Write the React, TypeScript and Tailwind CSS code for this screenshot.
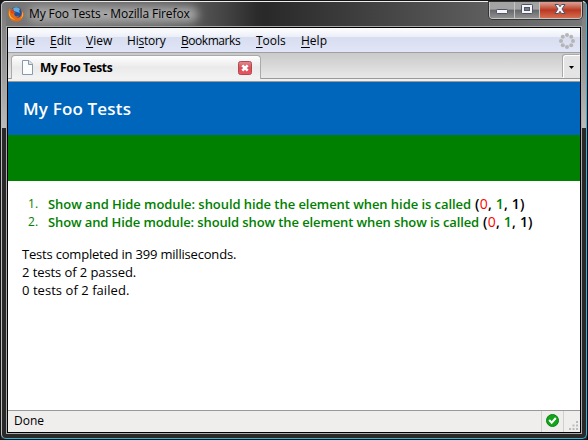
import type { ReactNode } from "react";

const menus: { key: string; before: string; after: string; box: string }[] = [
  { key: "F", before: "", after: "ile", box: "w-[34px]" },
  { key: "E", before: "", after: "dit", box: "w-9" },
  { key: "V", before: "", after: "iew", box: "w-[41px]" },
  { key: "s", before: "Hi", after: "tory", box: "w-[54px] tracking-[-0.2px]" },
  { key: "B", before: "", after: "ookmarks", box: "w-[75px] tracking-[-0.45px]" },
  { key: "T", before: "", after: "ools", box: "w-[45px]" },
  { key: "H", before: "", after: "elp", box: "w-9" },
];

const results = [
  { text: "Show and Hide module: should hide the element when hide is called", spacing: "tracking-[-0.06px]" },
  { text: "Show and Hide module: should show the element when show is called", spacing: "tracking-[-0.11px]" },
];

function FirefoxIcon() {
  return (
    <svg className="h-4 w-4 shrink-0" viewBox="0 0 16 16">
      <circle cx="8.3" cy="7.6" r="6.6" fill="#23509b" />
      <path d="M5 2.5 Q9 0 12 3 L11 5 L12 7 L9 6 L6 5Z" fill="#62aede" />
      <path d="M1.2 2.2 L2.7 3.8 Q4 2.9 5.6 3.5 Q5 4.4 5.2 5.4 L7.5 6 L6 7.7 Q6.4 10.5 9 10.4 L11 9.5 Q10.2 12 8 11.8 Q12.8 12.5 13.7 7.8 Q14 4.5 12.6 2.7 Q16 5.3 15.5 9.2 Q14.2 15.5 8.2 15.5 Q1.4 15 .5 8.5 Q.2 5 1.2 2.2Z" fill="#e66b16" />
      <path d="M1.5 4 Q.8 8 3 10.8 Q4.6 13 7.2 13.5 Q3 13.8 1.3 9.8 Q.3 6.4 1.5 4Z M13.9 5.5 Q15.3 10 12.3 12.8 Q15.2 11.3 15.2 8Z" fill="#ffc43b" />
      <path d="M2.5 4 L5.2 3.7 L4.8 5.3 L7 6.1 L5.6 7.8 L3 7Z" fill="#d94b12" />
    </svg>
  );
}

function WindowButtons() {
  return (
    <div className="absolute top-px left-[488px] flex h-[17px] w-[93px] overflow-hidden rounded-b-[4px] border border-t-0 border-[#c5c5c5] shadow-[0_0_0_1px_#353535]">
      <div className="flex w-[25px] justify-center border-r border-[#c5c5c5] bg-linear-to-b from-[#a3a3a3] from-45% via-[#66676b] via-50% to-[#909090]">
        <svg className="h-4 w-[25px] shrink-0" viewBox="0 0 25 16">
          <rect x="6.5" y="7.5" width="11" height="4" rx=".7" fill="#f5f5f5" stroke="#505469" />
        </svg>
      </div>
      <div className="flex w-[25px] justify-center border-r border-[#c5c5c5] bg-linear-to-b from-[#a3a3a3] from-45% via-[#66676b] via-50% to-[#909090]">
        <svg className="h-4 w-[25px] shrink-0" viewBox="0 0 25 16">
          <rect x="6.5" y="2.5" width="11" height="9" rx=".7" fill="#f5f5f5" stroke="#505469" />
          <rect x="9.5" y="5.5" width="5" height="3" fill="#777a87" stroke="#505469" />
        </svg>
      </div>
      <div className="flex w-[41px] justify-center bg-linear-to-b from-[#d79a8d] from-5% via-[#b93720] via-50% to-[#d66d4e]">
        <svg className="h-4 w-[42px] shrink-0" viewBox="0 0 42 16">
          <path d="M15 2.5H18.5L20 4.7L21.5 2.5H25L22 7L25 11.5H21.5L20 9.3L18.5 11.5H15L18 7Z" fill="#f7f7f7" stroke="#4f536a" />
        </svg>
      </div>
    </div>
  );
}

function TitleBar() {
  return (
    <div className="relative flex h-[24px] shrink-0 items-center bg-linear-to-r from-[#777] from-0% via-[#292929] via-45% to-[#777]">
      <div className="absolute inset-y-0 left-0 w-[250px] bg-linear-to-r from-[#777] via-[#666] via-60% to-transparent" />
      <div className="absolute top-[5px] left-[22px] h-[15px] w-[170px] rounded-full bg-[#aaa] blur-[5px]" />
      <div className="relative flex items-center pl-[2px]">
        <FirefoxIcon />
        <span className="ml-[5px] text-[12px] leading-4 tracking-[-0.1px] whitespace-nowrap text-black">My Foo Tests - Mozilla Firefox</span>
      </div>
    </div>
  );
}

function MenuBar() {
  return (
    <div className="flex h-[25px] shrink-0 items-center border-b border-[#a0a0a0] bg-[linear-gradient(to_bottom,#fff_0%,#eceff8_36%,#d8deef_39%,#e0e6f8_100%)] pt-px pr-[5px] pl-2 text-[12px]">
      <div className="flex h-full w-full items-center">
        {menus.map((m) => (
          <div key={m.key} className={`${m.box} shrink-0 whitespace-nowrap`}>
            {m.before}
            <span className="underline decoration-1 underline-offset-[2px]">{m.key}</span>
            {m.after}
          </div>
        ))}
        <svg className="ml-auto h-4 w-4 shrink-0" viewBox="0 0 16 16" fill="#b5b5b5">
          <circle cx="8" cy="2" r="2" /><circle cx="12.2" cy="3.8" r="2" />
          <circle cx="14" cy="8" r="2" /><circle cx="12.2" cy="12.2" r="2" />
          <circle cx="8" cy="14" r="2" /><circle cx="3.8" cy="12.2" r="2" />
          <circle cx="2" cy="8" r="2" /><circle cx="3.8" cy="3.8" r="2" />
        </svg>
      </div>
    </div>
  );
}

function TabBar() {
  return (
    <div className="flex h-[29px] shrink-0 flex-col bg-[#f0f0f0]">
      <div className="flex h-[26px] items-end border-b border-[#999] bg-linear-to-b from-[#cacaca] to-[#e8e8e8]">
        <div className="h-full w-[3px]" />
        <div className="-mb-px flex h-6 w-[250px] items-center rounded-t-[4px] border border-b-0 border-[#aaa] bg-linear-to-b from-white via-[#eaeaea] via-50% to-[#f3f3f3] pr-2 pl-[10px]">
          <svg className="h-[15px] w-[11px] shrink-0" viewBox="0 0 11 15">
            <path d="M.5 .5H7L10.5 4V14.5H.5Z" fill="#fcfdff" stroke="#8b9aaa" />
            <path d="M6.5 .5V4.5H10.5" fill="#dce5ed" stroke="#8b9aaa" />
          </svg>
          <span className="ml-[7px] text-[12px] font-bold tracking-[-0.4px]">My Foo Tests</span>
          <svg className="ml-auto h-[14px] w-[14px]" viewBox="0 0 14 14">
            <defs>
              <linearGradient id="close" x2="0" y2="1"><stop stopColor="#e18c91" /><stop offset=".5" stopColor="#d65058" /><stop offset="1" stopColor="#ee5360" /></linearGradient>
            </defs>
            <rect x=".5" y=".5" width="13" height="13" rx="2" fill="url(#close)" stroke="#b44850" />
            <path d="M4.3 4.3L9.7 9.7M9.7 4.3L4.3 9.7" stroke="white" strokeWidth="2.6" />
          </svg>
        </div>
        <div className="ml-auto flex h-[23px] w-[17px] items-center justify-center rounded-tl-[3px] border-t border-l border-white bg-[#e4e4e4] pr-px shadow-[-1px_-1px_0_#aaa]">
          <svg className="h-[3px] w-[5px]" viewBox="0 0 5 3"><path d="M0 0H5L2.5 3Z" /></svg>
        </div>
      </div>
      <div className="h-[3px] border-b border-[#9a9a9a]" />
    </div>
  );
}

function Counts({ children }: { children?: ReactNode }) {
  return (
    <span className="ml-[4px] text-[14px] tracking-[0.2px] text-black">
      (<span className="font-normal text-[#f00]">0</span>, <span className="text-[#008000]">1</span>, 1){children}
    </span>
  );
}

function Page() {
  return (
    <main className="flex min-h-0 flex-1 flex-col bg-white">
      <h1 className="flex h-[53px] shrink-0 items-center bg-[#0066bb] pl-[15px] text-[17px] font-semibold tracking-[0.17px] text-white">My Foo Tests</h1>
      <div className="h-[46px] shrink-0 bg-[#008000]" />
      <ol className="mt-[14px] text-[13px] leading-[18px] text-[#008000]">
        {results.map(({ text, spacing }, i) => (
          <li key={text} className="flex h-[18px] whitespace-nowrap">
            <span className="w-10 pl-5 text-[12px]">{i + 1}.</span>
            <span className={`font-semibold ${spacing}`}>{text}<Counts /></span>
          </li>
        ))}
      </ol>
      <div className="mt-[14px] pl-[14px] text-[13px] leading-[18px]">
        <p className="tracking-[-0.2px]">Tests completed in 399 milliseconds.</p>
        <p className="tracking-[-0.08px]">2 tests of 2 passed.</p>
        <p className="tracking-[0.05px]">0 tests of 2 failed.</p>
      </div>
    </main>
  );
}

function StatusBar() {
  return (
    <div className="flex h-[22px] shrink-0 border-t border-[#999] bg-[#f0eded] text-[12px] leading-[19px]">
      <span className="pl-[6px]">Done</span>
      <div className="ml-auto flex w-[23px] items-center justify-center border-x border-[#d2cfcf] pb-[3px]">
        <svg className="h-[13px] w-[13px]" viewBox="0 0 13 13">
          <circle cx="6.5" cy="6.5" r="6" fill="#12a51b" stroke="#078510" />
          <path d="M3.2 6L5.7 8.7L9.8 4" fill="none" stroke="white" strokeWidth="2" />
        </svg>
      </div>
      <div className="flex w-[16px] items-end justify-end p-[1px]">
        <svg className="h-[10px] w-[10px]" viewBox="0 0 10 10" fill="#bbb">
          <path d="M7 0h2v2h-2zM7 3.5h2v2h-2zM3.5 3.5h2v2h-2zM7 7h2v2h-2zM3.5 7h2v2h-2zM0 7h2v2h-2z" />
        </svg>
      </div>
    </div>
  );
}

export default function App() {
  return (
    <div className="h-[440px] w-[588px] overflow-hidden bg-[#161616] font-['Open_Sans','Noto_Sans',sans-serif] text-black">
      <div className="relative flex h-full flex-col rounded-t-[6px] border border-[#161616] border-r-black bg-linear-to-b from-[#777] from-0% via-[#bbb] via-29% to-[#292929] to-29%">
        <div className="flex h-full flex-col rounded-[5px] border border-t-[#eee] border-r-[#27b9e2] border-b-[#27b9e2] border-l-[#bbb] px-[4px] pb-[4px]">
          <TitleBar />
          <div className="flex min-h-0 flex-1 flex-col border border-[#aaa]">
            <div className="flex min-h-0 flex-1 flex-col border border-black">
              <MenuBar />
              <TabBar />
              <Page />
              <StatusBar />
            </div>
          </div>
        </div>
        <WindowButtons />
      </div>
    </div>
  );
}
